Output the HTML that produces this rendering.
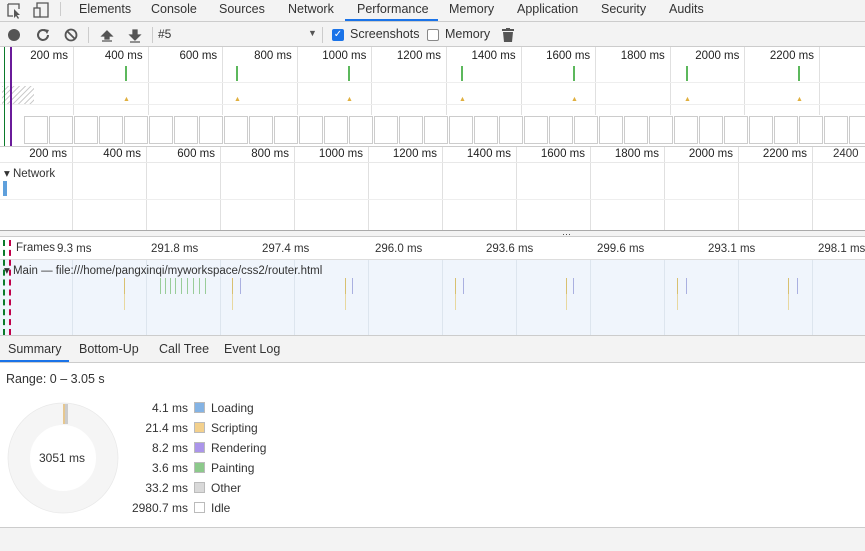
<!DOCTYPE html>
<html><head><meta charset="utf-8"><style>
*{box-sizing:border-box;margin:0;padding:0}
body{width:865px;height:551px;overflow:hidden;background:#fff;font-family:"Liberation Sans",sans-serif;font-size:12px;color:#333;position:relative}
.a{position:absolute;white-space:nowrap}
.tabs{left:0;top:0;width:865px;height:22px;background:#f3f3f3;border-bottom:1px solid #ccc}
.tab{top:1px;height:21px;line-height:16px;font-size:12.5px;color:#333}
.tb{left:0;top:22px;width:865px;height:25px;background:#f3f3f3;border-bottom:1px solid #ccc}
.vl{width:1px;background:#e0e0e0}
.lbl{font-size:11.5px;color:#222;text-align:right;width:70px}
.shot{top:116px;width:24px;height:28px;border:1px solid #ccc;background:#fff}
</style></head><body>
<div class="a tabs"></div>
<svg class="a" style="left:6px;top:2px" width="44" height="17"><path d="M2 2h11v5M2 2v12h5" stroke="#555" fill="none" stroke-width="1.3"/><path d="M8 7l6 6-3 0 2 3-1 1-2-3-2 2z" fill="#555"/><rect x="28" y="6" width="6" height="9" stroke="#555" fill="none" stroke-width="1.3"/><path d="M31 6V1h11v14h-8" stroke="#555" fill="none" stroke-width="1.3"/></svg>
<div class="a" style="left:60px;top:2px;width:1px;height:14px;background:#ccc"></div>
<div class="a tab" style="left:79px">Elements</div>
<div class="a tab" style="left:151px">Console</div>
<div class="a tab" style="left:219px">Sources</div>
<div class="a tab" style="left:288px">Network</div>
<div class="a tab" style="left:357px">Performance</div>
<div class="a" style="left:345px;top:19px;width:93px;height:2px;background:#1a73e8"></div>
<div class="a tab" style="left:449px">Memory</div>
<div class="a tab" style="left:517px">Application</div>
<div class="a tab" style="left:601px">Security</div>
<div class="a tab" style="left:669px">Audits</div>
<div class="a tb"></div>
<svg class="a" style="left:6px;top:27px" width="140" height="16"><circle cx="8" cy="8" r="6" fill="#555"/><path d="M40 4a5 5 0 1 0 2 4" stroke="#555" stroke-width="2" fill="none"/><path d="M38 2l5 1-2 4z" fill="#555"/><circle cx="65" cy="8" r="5.5" stroke="#555" stroke-width="1.8" fill="none"/><path d="M61 4l8 8" stroke="#555" stroke-width="1.8"/><path d="M101 4l-5 5h3v3h4V9h3zM96 14h10" stroke="#555" stroke-width="1.3" fill="#555"/><path d="M129 13l-5-5h3V3h4v5h3zM124 15h10" stroke="#555" stroke-width="1.3" fill="#555"/></svg>
<div class="a" style="left:88px;top:27px;width:1px;height:16px;background:#ccc"></div>
<div class="a" style="left:152px;top:27px;width:1px;height:16px;background:#ccc"></div>
<div class="a" style="left:158px;top:27px;font-size:12px">#5</div>
<div class="a" style="left:308px;top:28px;font-size:9px;color:#555">▼</div>
<div class="a" style="left:322px;top:27px;width:1px;height:16px;background:#ccc"></div>
<div class="a" style="left:332px;top:29px;width:12px;height:12px;border-radius:2px;background:#1a73e8;color:#fff;font-size:10px;line-height:12px;text-align:center">✓</div>
<div class="a" style="left:350px;top:27px;font-size:12.5px">Screenshots</div>
<div class="a" style="left:427px;top:29px;width:12px;height:12px;border-radius:2px;border:1px solid #888;background:#fff"></div>
<div class="a" style="left:445px;top:27px;font-size:12.5px">Memory</div>
<svg class="a" style="left:502px;top:28px" width="12" height="14"><rect x="0" y="1" width="12" height="2" fill="#555"/><rect x="4" y="0" width="4" height="2" fill="#555"/><path d="M1 4h10l-1 10H2z" fill="#555"/></svg>
<div class="a" style="left:0;top:260px;width:865px;height:75px;background:#f0f5fc"></div>
<div id="ov"></div>
<div class="a" style="left:0;top:146px;width:865px;height:1px;background:#ccc"></div>
<div class="a" style="left:0;top:162px;width:865px;height:1px;background:#e8e8e8"></div>
<div class="a" style="left:4px;top:166px;font-size:11.5px">▾ Network</div>
<div class="a" style="left:3px;top:181px;width:4px;height:15px;background:#5fa0dc"></div>
<div class="a" style="left:0;top:199px;width:865px;height:1px;background:#eee"></div>
<div class="a" style="left:0;top:230px;width:865px;height:7px;background:#f3f3f3;border-top:1px solid #aaa;border-bottom:1px solid #ccc"></div>
<div class="a" style="left:562px;top:229px;font-size:9px;color:#333">···</div>
<div class="a" style="left:16px;top:242px;font-size:11.5px">Frames</div>
<div class="a" style="left:57px;top:243px;font-size:11.5px">9.3 ms</div>
<div class="a" style="left:151px;top:243px;font-size:11.5px">291.8 ms</div>
<div class="a" style="left:262px;top:243px;font-size:11.5px">297.4 ms</div>
<div class="a" style="left:375px;top:243px;font-size:11.5px">296.0 ms</div>
<div class="a" style="left:486px;top:243px;font-size:11.5px">293.6 ms</div>
<div class="a" style="left:597px;top:243px;font-size:11.5px">299.6 ms</div>
<div class="a" style="left:708px;top:243px;font-size:11.5px">293.1 ms</div>
<div class="a" style="left:818px;top:243px;font-size:11.5px">298.1 ms</div>
<div class="a" style="left:0;top:259px;width:865px;height:1px;background:#ddd"></div>
<div class="a" style="left:4px;top:263px;font-size:11.5px">▾ Main — file:///home/pangxinqi/myworkspace/css2/router.html</div>
<div id="fl"></div>
<div class="a" style="left:3px;top:240px;width:2px;height:95px;border-left:2px dashed #0a7a2a"></div>
<div class="a" style="left:9px;top:240px;width:2px;height:95px;border-left:2px dashed #c0004a"></div>
<div class="a" style="left:0;top:335px;width:865px;height:28px;background:#f3f3f3;border-top:1px solid #ccc;border-bottom:1px solid #ccc"></div>
<div class="a" style="left:8px;top:342px;font-size:12.5px">Summary</div>
<div class="a" style="left:0;top:360px;width:69px;height:2px;background:#1a73e8"></div>
<div class="a" style="left:79px;top:342px;font-size:12.5px">Bottom-Up</div>
<div class="a" style="left:159px;top:342px;font-size:12.5px">Call Tree</div>
<div class="a" style="left:224px;top:342px;font-size:12.5px">Event Log</div>
<div class="a" style="left:6px;top:372px;font-size:12.5px">Range: 0 – 3.05 s</div>
<svg class="a" style="left:7px;top:402px" width="112" height="112"><circle cx="56" cy="56" r="44" fill="none" stroke="#f5f5f5" stroke-width="22"/><circle cx="56" cy="56" r="55" fill="none" stroke="#e8e8e8" stroke-width="0.7"/><rect x="56" y="2" width="2" height="20" fill="#e6c790"/><rect x="58" y="2" width="3" height="20" fill="#ccc"/></svg>
<div class="a" style="left:39px;top:451px;font-size:12px">3051 ms</div>
<div id="leg"></div>
<div class="a" style="left:0;top:527px;width:865px;height:24px;background:#f3f3f3;border-top:1px solid #ccc"></div>
<script>
var h='';
var lab=['200','400','600','800','1000','1200','1400','1600','1800','2000','2200'];
for(var i=0;i<11;i++){var x=73+i*74.6;h+='<div class="a vl" style="left:'+x+'px;top:47px;height:68px"></div><div class="a lbl" style="left:'+(x-75)+'px;top:50px">'+lab[i]+' ms</div>';}
var lab2=['200','400','600','800','1000','1200','1400','1600','1800','2000','2200','2400'];
for(var i=0;i<12;i++){var x=72+i*74;h+='<div class="a vl" style="left:'+x+'px;top:147px;height:83px"></div><div class="a vl" style="left:'+x+'px;top:260px;height:75px;background:#dde5ee"></div>'+(i<11?'<div class="a lbl" style="left:'+(x-75)+'px;top:148px">'+lab2[i]+' ms</div>':'<div class="a" style="left:833px;top:148px;font-size:11.5px">2400</div>');}
[125,236,348,461,573,686,798].forEach(function(x){h+='<div class="a" style="left:'+x+'px;top:66px;width:2px;height:15px;background:#5cb85c"></div><div class="a" style="left:'+(x-2)+'px;top:96px;font-size:7px;color:#e0b040">▲</div>';});
h+='<div class="a" style="left:0;top:82px;width:865px;height:1px;background:#eee"></div><div class="a" style="left:0;top:104px;width:865px;height:1px;background:#eee"></div>';
h+='<div class="a" style="left:2px;top:86px;width:32px;height:18px;background:repeating-linear-gradient(135deg,#ccc 0 1px,transparent 1px 4px)"></div>';
for(var i=0;i<35;i++){h+='<div class="a shot" style="left:'+(24+i*25)+'px"></div>';}
h+='<div class="a" style="left:4px;top:47px;width:1px;height:99px;background:#0a7a2a"></div><div class="a" style="left:10px;top:47px;width:2px;height:99px;background:#6a1b9a"></div>';
document.getElementById('ov').innerHTML=h;
var f='';
[124,160,165,170,175,181,187,193,199,205,232,240,345,352,455,463,566,573,677,686,788,797].forEach(function(x,j){var c=(j>=1&&j<10)?'#9c9':(j%2==1?'#aab0e0':'#d8c070');f+='<div class="a" style="left:'+x+'px;top:278px;width:1px;height:16px;background:'+c+'"></div>';if(c=='#d8c070')f+='<div class="a" style="left:'+x+'px;top:294px;width:1px;height:16px;background:#e8d8a0"></div>';});
document.getElementById('fl').innerHTML=f;
var L=[['4.1 ms','#84b3e4','Loading'],['21.4 ms','#f3d08c','Scripting'],['8.2 ms','#ab95ea','Rendering'],['3.6 ms','#8cc98b','Painting'],['33.2 ms','#d9d9d9','Other'],['2980.7 ms','#fff','Idle']];
var g='';L.forEach(function(r,i){var y=401+i*20;g+='<div class="a" style="left:100px;width:88px;text-align:right;top:'+y+'px;font-size:12px">'+r[0]+'</div><div class="a" style="left:194px;top:'+(y+1)+'px;width:11px;height:11px;background:'+r[1]+';border:1px solid #bbb"></div><div class="a" style="left:211px;top:'+y+'px;font-size:12px">'+r[2]+'</div>';});
document.getElementById('leg').innerHTML=g;
</script>
</body></html>
